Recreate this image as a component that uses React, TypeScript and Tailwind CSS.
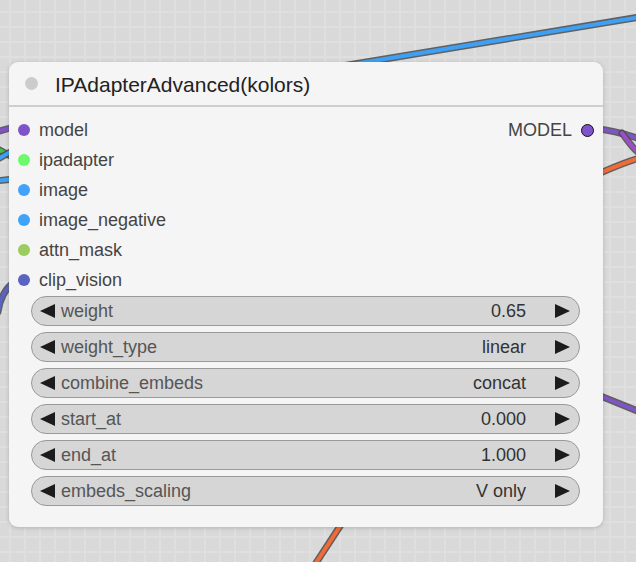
import React from "react";

const INPUTS = [
  { name: "model", color: "bg-[#7f54c8]" },
  { name: "ipadapter", color: "bg-[#6cfa6c]" },
  { name: "image", color: "bg-[#40a2f8]" },
  { name: "image_negative", color: "bg-[#40a2f8]" },
  { name: "attn_mask", color: "bg-[#9ccb5e]" },
  { name: "clip_vision", color: "bg-[#5a63c1]" },
];

const WIDGETS = [
  { label: "weight", value: "0.65" },
  { label: "weight_type", value: "linear" },
  { label: "combine_embeds", value: "concat" },
  { label: "start_at", value: "0.000" },
  { label: "end_at", value: "1.000" },
  { label: "embeds_scaling", value: "V only" },
];

// wires drawn on the canvas behind the node: dark outline + coloured core
const WIRES = [
  { d: "M 330 68 L 640 17", c: "#3ea0f5" },
  { d: "M -4 132 L 14 127", c: "#7f54c8" },
  { d: "M -4 148 L 14 158", c: "#3fbf4f" },
  { d: "M -4 160 L 14 150", c: "#3ea0f5" },
  { d: "M -4 181 L 14 179", c: "#3ea0f5" },
  { d: "M -2 312 C 0 298 6 288 14 282", c: "#5a63c1" },
  { d: "M 598 129 C 612 130 625 134 640 139", c: "#7f54c8" },
  { d: "M 622 133 C 628 141 632 148 640 154", c: "#9a4fc8" },
  { d: "M 598 174 C 612 168 625 162 640 158", c: "#f26a35" },
  { d: "M 598 395 L 640 412", c: "#7f54c8" },
  { d: "M 348 514 L 314 566", c: "#f26a35" },
];

function Arrow({ dir }: { dir: "l" | "r" }) {
  return (
    <svg width="15" height="14" viewBox="0 0 15 14" className="shrink-0">
      {dir === "l" ? (
        <path d="M0 7 L15 0 L15 14 Z" fill="#1c1c1c" />
      ) : (
        <path d="M15 7 L0 0 L0 14 Z" fill="#1c1c1c" />
      )}
    </svg>
  );
}

export default function App() {
  return (
    <div
      className="relative h-[562px] w-[636px] overflow-hidden bg-[#d9d9d9] bg-[linear-gradient(to_right,#dfdfdf_2px,transparent_2px),linear-gradient(to_bottom,#dfdfdf_2px,transparent_2px)] bg-[size:15px_15px] bg-[position:9px_11px]"
      style={{ fontFamily: '"Liberation Sans", Arial, sans-serif' }}
    >
      <svg className="absolute inset-0" width="636" height="562">
        {WIRES.map((w, i) => (
          <g key={i} fill="none" strokeLinecap="round">
            <path d={w.d} stroke="#4a4a4a" strokeWidth="7" opacity="0.85" />
            <path d={w.d} stroke={w.c} strokeWidth="4" />
          </g>
        ))}
      </svg>

      {/* node */}
      <div className="absolute left-[9px] top-[62px] flex h-[465px] w-[594px] flex-col rounded-[9px] bg-[#f5f5f5] shadow-[0_1px_4px_rgba(0,0,0,0.18)]">
        <div className="flex h-[45px] shrink-0 items-center gap-[17px] border-b-2 border-[#cfcfcf] pl-[16px]">
          <span className="h-[13px] w-[13px] rounded-full bg-[#cccccc]" />
          <span className="pt-[3px] text-[21px] text-[#222]">IPAdapterAdvanced(kolors)</span>
        </div>

        <div className="relative pt-[8px]">
          {INPUTS.map((inp) => (
            <div key={inp.name} className="flex h-[30px] items-center gap-[9px] pl-[9px]">
              <span className={`h-[12px] w-[12px] rounded-full ${inp.color}`} />
              <span className="text-[18px] text-[#444]">{inp.name}</span>
            </div>
          ))}
          <div className="absolute right-[9px] top-[8px] flex h-[30px] items-center gap-[9px]">
            <span className="text-[18px] text-[#444]">MODEL</span>
            <span className="h-[13px] w-[13px] rounded-full border-[1.5px] border-[#111] bg-[#7f54c8]" />
          </div>
        </div>

        <div className="mt-[1px] flex flex-col gap-[6px] px-[22px] pr-[23px]">
          {WIDGETS.map((w) => (
            <div
              key={w.label}
              className="flex h-[30px] items-center rounded-full border border-[#9a9a9a] bg-[#d6d6d6] pl-[8px] pr-[9px]"
            >
              <Arrow dir="l" />
              <span className="ml-[6px] flex-1 text-[18px] text-[#555]">{w.label}</span>
              <span className="mr-[29px] text-[18px] text-[#333]">{w.value}</span>
              <Arrow dir="r" />
            </div>
          ))}
        </div>
      </div>
    </div>
  );
}
